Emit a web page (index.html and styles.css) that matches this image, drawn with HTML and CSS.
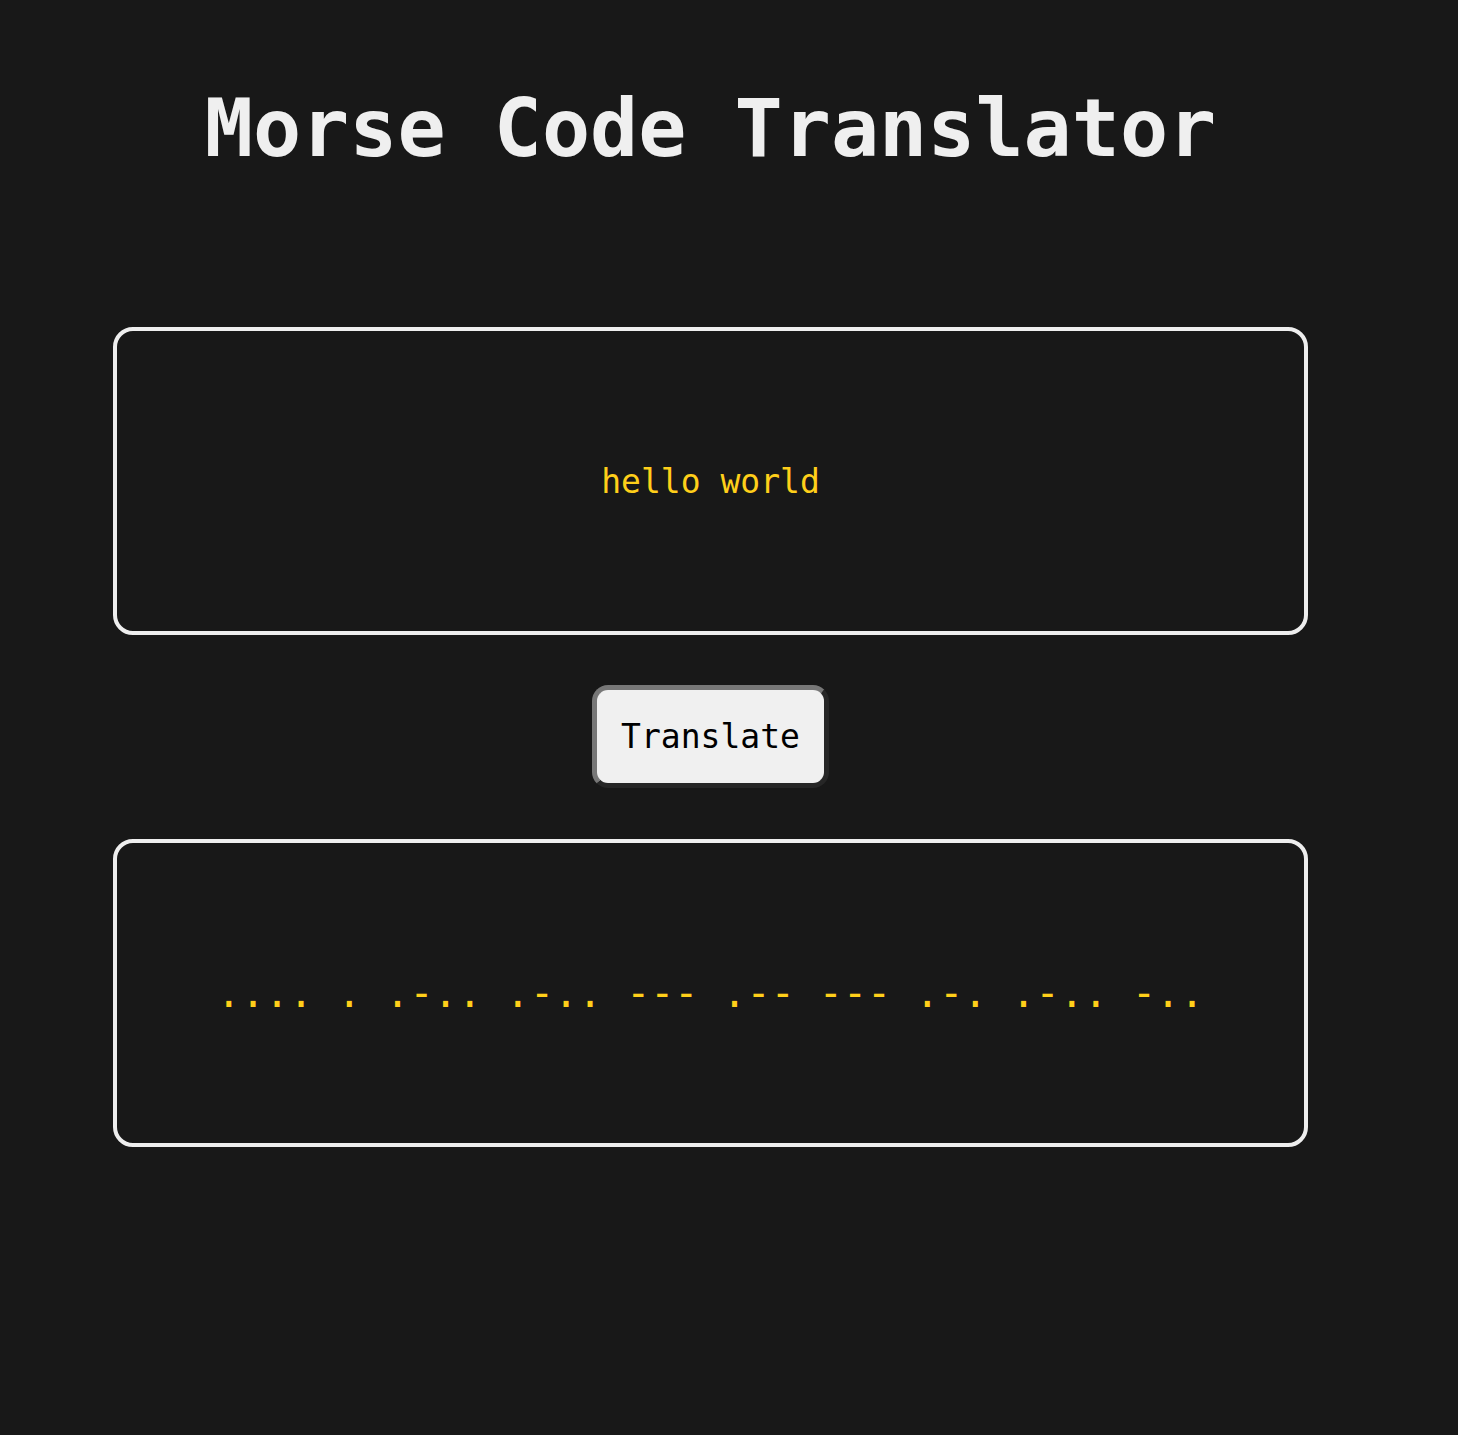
FILE: index.html
```html
<!DOCTYPE html>
<html lang="en">
<head>
<meta charset="utf-8">
<title>Morse Code Translator</title>
<link rel="stylesheet" href="styles.css">
</head>
<body>
<main class="app">
  <h1 class="title">Morse Code Translator</h1>
  <div class="box"><span class="input-text">hello world</span></div>
  <div class="actions"><button class="btn" type="button">Translate</button></div>
  <div class="box"><span class="output-text">.... . .-.. .-.. --- .-- --- .-. .-.. -..</span></div>
</main>
</body>
</html>
```
FILE: styles.css
```css
html, body {
  margin: 0;
  padding: 0;
  background: #181818;
}
body {
  font-family: "DejaVu Sans Mono", "Liberation Mono", monospace;
  color: #eeeeee;
  min-height: 1435px;
}
.app {
  width: 1195px;
  margin-left: 113px;
  padding-top: 89px;
  display: flex;
  flex-direction: column;
}
.title {
  margin: 0 0 158px 0;
  font-size: 80px;
  line-height: 80px;
  font-weight: bold;
  text-align: center;
  white-space: pre;
  color: #efefef;
}
.box {
  box-sizing: border-box;
  height: 308px;
  border: 4px solid #eeeeee;
  border-radius: 20px;
  display: flex;
  align-items: center;
  justify-content: center;
}
.input-text {
  font-size: 33px;
  color: #ffcf1a;
  white-space: pre;
}
.output-text {
  font-size: 40px;
  color: #ffcf1a;
  white-space: pre;
}
.actions {
  display: flex;
  justify-content: center;
  margin: 50px 0 51px 0;
}
.btn {
  font-family: "DejaVu Sans Mono", "Liberation Mono", monospace;
  font-size: 33px;
  line-height: 39px;
  padding: 27px 24px;
  background: #f0f0f0;
  color: #000000;
  border-style: solid;
  border-width: 5px;
  border-color: #777777 #262626 #262626 #777777;
  border-radius: 16px;
}
```
